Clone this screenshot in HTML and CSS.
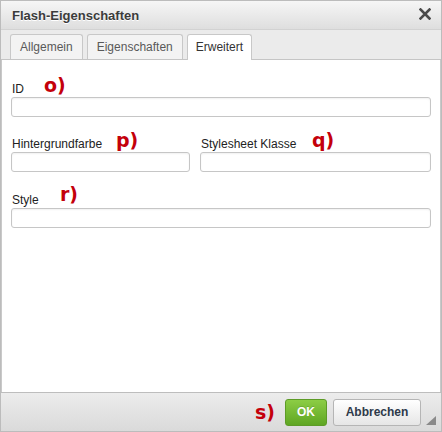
FILE: index.html
```html
<!DOCTYPE html>
<html lang="de">
<head>
    <meta charset="UTF-8">
    <title>Flash-Eigenschaften</title>
    <link rel="stylesheet" href="styles.css">
</head>
<body>

<!-- Dialog -->
<div class="dialog">
    <div class="titlebar">
        <span class="title">Flash-Eigenschaften</span>
        <span class="close">
            <svg width="12" height="12" viewBox="0 0 12 12">
                <path d="M1.5 1.5 L10.5 10.5 M10.5 1.5 L1.5 10.5" stroke="#4a4a4a" stroke-width="2.6" stroke-linecap="square"/>
            </svg>
        </span>
    </div>

    <div class="tabs">
        <div class="tab">Allgemein</div>
        <div class="tab">Eigenschaften</div>
        <div class="tab active">Erweitert</div>
    </div>

    <div class="panel">
        <div class="field">
            <label>ID</label>
            <input type="text">
        </div>
        <div class="row">
            <div class="field">
                <label>Hintergrundfarbe</label>
                <input type="text">
            </div>
            <div class="field">
                <label>Stylesheet Klasse</label>
                <input type="text">
            </div>
        </div>
        <div class="field">
            <label>Style</label>
            <input type="text">
        </div>
    </div>

    <div class="footer">
        <button class="btn ok">OK</button>
        <button class="btn cancel">Abbrechen</button>
        <span class="grip"></span>
    </div>

    <!-- Markierungen -->
    <span class="mark mark-o">o)</span>
    <span class="mark mark-p">p)</span>
    <span class="mark mark-q">q)</span>
    <span class="mark mark-r">r)</span>
    <span class="mark mark-s">s)</span>
</div>

</body>
</html>
```

FILE: styles.css
```css
* {
    box-sizing: border-box;
}
body {
    margin: 0;
    font-family: "Liberation Sans", Arial, sans-serif;
    background-color: #fff;
}

.dialog {
    position: relative;
    display: flex;
    flex-direction: column;
    width: 442px;
    height: 432px;
    border: 1px solid #bcbcbc;
    background-color: #ebebeb;
}

.titlebar {
    display: flex;
    justify-content: space-between;
    align-items: center;
    height: 29px;
    padding: 0 10px 0 11px;
    border-bottom: 1px solid #d2d2d2;
    background: linear-gradient(#f6f6f6, #dedede);
}
.title {
    font-size: 13px;
    font-weight: bold;
    color: #3b3b3b;
    text-shadow: 0 1px 0 #fff;
}
.close {
    display: flex;
    margin-top: -2px;
}

.tabs {
    display: flex;
    align-items: flex-end;
    gap: 4px;
    height: 30px;
    padding-left: 9px;
    border-bottom: 1px solid #c5c5c5;
    background-color: #ebebeb;
}
.tab {
    height: 25px;
    padding: 0 9px;
    border: 1px solid #c8c8c8;
    border-bottom: none;
    border-radius: 3px 3px 0 0;
    background-color: #f3f3f3;
    color: #595959;
    font-size: 12px;
    line-height: 24px;
}
.tab.active {
    height: 26px;
    margin-bottom: -1px;
    padding: 0 8px;
    background-color: #fff;
    color: #333;
}

.panel {
    flex: 1;
    padding: 22px 9px 0 9px;
    border-left: 1px solid #c9c9c9;
    border-right: 1px solid #c9c9c9;
    background-color: #fff;
}
.field {
    display: flex;
    flex-direction: column;
}
.field label {
    padding-left: 1px;
    margin-bottom: 1px;
    font-size: 12px;
    line-height: 14px;
    color: #222;
}
.field input {
    height: 20px;
    margin: 0;
    border: 1px solid #c6c6c6;
    border-radius: 3px;
    box-shadow: inset 0 1px 2px rgba(0,0,0,.06);
    background-color: #fff;
}
.row {
    display: grid;
    grid-template-columns: 179px 1fr;
    gap: 10px;
    margin: 20px 0 21px;
}

.footer {
    position: relative;
    display: flex;
    justify-content: flex-end;
    align-items: center;
    gap: 6px;
    height: 39px;
    padding-right: 20px;
    border-top: 1px solid #bdbdbd;
    background: linear-gradient(#ececec, #dadada);
}
.btn {
    height: 27px;
    margin: 0;
    border-radius: 3px;
    font-family: "Liberation Sans", Arial, sans-serif;
    font-size: 12px;
    font-weight: bold;
    cursor: pointer;
}
.ok {
    width: 42px;
    border: 1px solid #5d9b27;
    background: linear-gradient(#8ccd45, #5fa623);
    color: #fff;
    text-shadow: 0 -1px 0 rgba(0,0,0,.15);
}
.cancel {
    width: 88px;
    border: 1px solid #b5b5b5;
    background: linear-gradient(#fff, #e6e6e6);
    color: #2e3a4a;
}
.grip {
    position: absolute;
    right: 5px;
    bottom: 6px;
    width: 0;
    height: 0;
    border-left: 10px solid transparent;
    border-bottom: 9px solid #8a8a8a;
}

.mark {
    position: absolute;
    font-family: "DejaVu Sans", Verdana, sans-serif;
    font-size: 19px;
    font-weight: bold;
    line-height: 19px;
    color: #c4000b;
}
.mark-o { left: 43px; top: 75px; }
.mark-p { left: 115px; top: 130px; }
.mark-q { left: 311px; top: 130px; }
.mark-r { left: 59px; top: 184px; }
.mark-s { left: 254px; top: 402px; }
```
